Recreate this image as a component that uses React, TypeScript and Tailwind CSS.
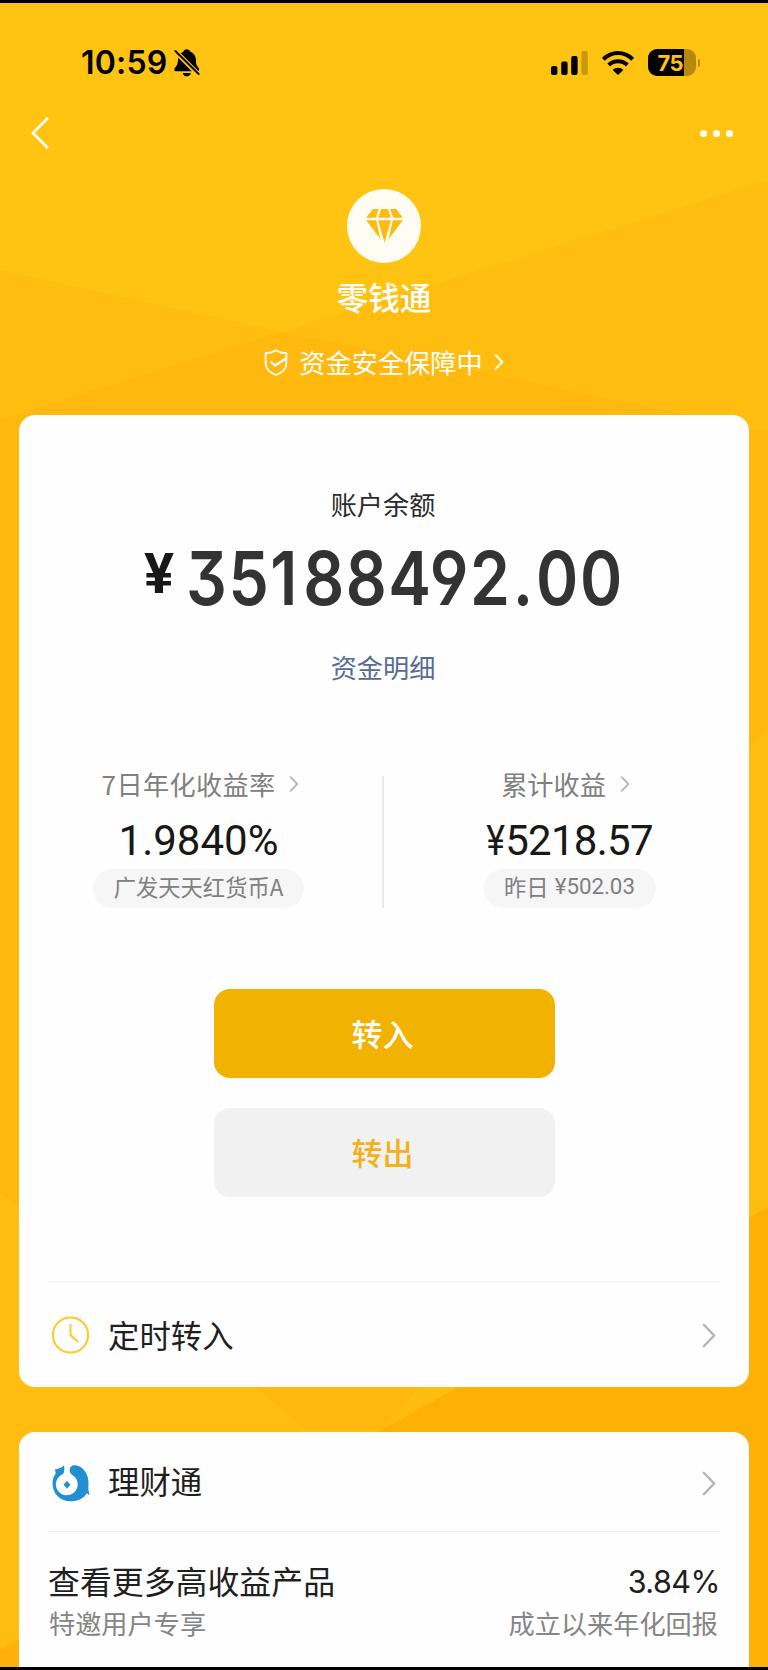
import type { ReactNode } from 'react';

type ChevronProps = {
  className: string;
  strokeWidth?: number;
};

function ChevronRight({ className, strokeWidth = 2.4 }: ChevronProps) {
  return (
    <svg viewBox="0 0 14 26" fill="none" stroke="currentColor" strokeWidth={strokeWidth} strokeLinecap="round" className={className}>
      <path d="M1.6 1.8 12.4 13 1.6 24.2" />
    </svg>
  );
}

function Background() {
  return (
    <svg viewBox="0 0 768 1670" preserveAspectRatio="none" className="absolute inset-0 h-full w-full">
      <rect width="768" height="1670" fill="#ffc412" />
      <path d="M0 268 282 330 768 178V1670H0Z" fill="#ffbe0f" />
      <path d="M0 418 282 330 686 413 768 430V728L460 1040 420 1388 384 1431H305L253 1387 19 1207 0 1195Z" fill="#ffb80e" />
      <path d="M768 1208 460 1388 384 1431 340 1460V1670H768Z" fill="#ffb005" />
      <path d="M0 1653 30 1636V1670H0Z" fill="#ffb00a" />
    </svg>
  );
}

function StatusBar() {
  return (
    <div className="flex h-[88px] items-center pt-[31px] pr-[68px] pl-[81px] text-black">
      <span className="font-['Inter'] text-[32px] leading-8 font-semibold tracking-[0.2px]">10:59</span>
      <svg viewBox="0 0 78 84" className="ml-[7px] h-7 w-[26px]">
        <path d="M38 1C43 1 48 4 49 8 60 12 66 22 66 34 66 48 69 51 74 57 77 62 76 67 70 67H6C0 67 0 60 3 56 10 50 11 44 12 34 13 20 18 12 28 8 29 4 33 1 38 1Z" fill="currentColor" />
        <path d="M26 72H51C49 79 44 82 38 82S28 79 26 72Z" fill="currentColor" />
        <path d="M-2 1 76 79" stroke="#ffc412" strokeWidth="15" />
        <path d="M4 6 74 75" stroke="currentColor" strokeWidth="5.5" strokeLinecap="round" />
      </svg>
      <div className="ml-auto flex items-center">
        <svg viewBox="0 0 38 24" className="h-6 w-[38px]" fill="currentColor">
          <rect x="0" y="15" width="6.4" height="9" rx="2" />
          <rect x="10.2" y="10.5" width="6.4" height="13.5" rx="2" />
          <rect x="20.2" y="5" width="6.4" height="19" rx="2" />
          <rect x="30.4" y="0" width="6.4" height="24" rx="2" opacity="0.22" />
        </svg>
        <svg viewBox="0 0 96 72" className="ml-[13px] h-6 w-8" fill="none" stroke="currentColor" strokeWidth="12">
          <path d="M4 25C29 0 67 0 92 25" />
          <path d="M20 42C36 27 60 27 76 42" />
          <path d="M32 57C41 48 55 48 64 57L48 72Z" fill="currentColor" stroke="none" />
        </svg>
        <div className="ml-[14px] flex h-[27px] w-12 items-center overflow-hidden rounded-[9px] bg-[linear-gradient(90deg,#000_36px,#b5890f_36px)] pl-[10px]">
          <span className="font-['Inter'] text-[22px] leading-none font-bold tracking-[-0.5px] text-[#ffc412]">75</span>
        </div>
        <div className="ml-[2px] h-2 w-[2.5px] rounded-r-full bg-[#b5890f]" />
      </div>
    </div>
  );
}

function Hero() {
  return (
    <header className="flex h-[412px] flex-col text-white">
      <StatusBar />
      <div className="flex h-[84px] shrink-0 items-center justify-between pr-[35px] pl-[31px]">
        <svg viewBox="0 0 18 32" className="h-8 w-[18px]" fill="none" stroke="currentColor" strokeWidth="2.6">
          <path d="M16.8 1 2 16 16.8 31" />
        </svg>
        <div className="flex gap-[6px]">
          <i className="size-[7px] rounded-full bg-white" />
          <i className="size-[7px] rounded-full bg-white" />
          <i className="size-[7px] rounded-full bg-white" />
        </div>
      </div>
      <div className="mx-auto mt-[14px] flex size-[74px] shrink-0 items-center justify-center rounded-full bg-[#fffdf3]">
        <svg viewBox="0 0 110 102" className="h-[34px] w-[37px]" fill="#fdbb10">
          <path d="M20 0H38L29 26H0Z" />
          <path d="M45 0H65L74 26H36Z" />
          <path d="M72 0H90L110 26H81Z" />
          <path d="M0 34H30L43 91Z" />
          <path d="M36 34H74L55 102Z" />
          <path d="M80 34H110L67 91Z" />
        </svg>
      </div>
      <h1 className="mt-[13px] h-10 text-center text-[31.6px] leading-10 font-medium">零钱通</h1>
      <div className="mt-[26px] flex h-10 items-center justify-center text-[26.2px] leading-10">
        <svg viewBox="0 0 24 27" className="mr-[11px] h-[27px] w-6" fill="none" stroke="currentColor" strokeWidth="1.8" strokeLinejoin="round">
          <path d="M12 1.2C9 3.2 5 4 1.6 4.2V14C1.6 20 6 23.8 12 26 18 23.8 22.4 20 22.4 14V4.2C19 4 15 3.2 12 1.2Z" />
          <path d="M6.5 12.5 11 16.5 22 9.5" strokeWidth="2.2" />
        </svg>
        <span>资金安全保障中</span>
        <ChevronRight className="ml-[11px] h-4 w-[10px]" strokeWidth={3.2} />
      </div>
    </header>
  );
}

type StatProps = {
  label: string;
  value: ReactNode;
  note: ReactNode;
  labelClass: string;
  noteClass: string;
};

function Stat({ label, value, note, labelClass, noteClass }: StatProps) {
  return (
    <div className="flex w-[359px] flex-col items-center">
      <div className={`flex h-9 items-center pt-0.5 text-[26.2px] leading-9 text-[#808080] ${labelClass}`}>
        {label}
        <ChevronRight className="ml-[14px] h-4 w-[10px] text-[#b8b8b8]" strokeWidth={3} />
      </div>
      <div className="h-[68px] pt-[10px] font-['Roboto'] text-[42px] leading-[60px] whitespace-nowrap text-[#181818]">{value}</div>
      <div className={`flex h-[39px] items-center justify-center rounded-full bg-[#f6f6f6] pb-[5px] text-[22.3px] leading-8 whitespace-nowrap text-[#808080] ${noteClass}`}>
        {note}
      </div>
    </div>
  );
}

function BalanceCard() {
  return (
    <section className="mx-[19px] flex h-[972px] flex-col rounded-2xl bg-[#fefefe] pt-[71px]">
      <div className="h-9 pr-[2px] text-center text-[26.2px] leading-[37px] text-[#2b2b2b]">账户余额</div>
      <div className="flex h-28 pl-[125px]">
        <span className="w-[42px] pt-[22px] font-['Roboto'] text-[56px] leading-[60px] font-bold text-[#181818]">¥</span>
        <span className="origin-left scale-x-86 font-['Inter'] text-[74.5px] leading-[112px] font-semibold tracking-[1.8px] whitespace-nowrap text-[#333] [font-feature-settings:'cv04','cv09']">
          35<span className="mr-[5px]">1</span>88492<span className="mx-[1.5px]">.</span>00
        </span>
      </div>
      <a className="h-16 pt-px pr-[2px] text-center text-[26.2px] leading-[64px] text-[#576b95]">资金明细</a>
      <div className="mt-[67px] flex h-[143px] shrink-0 items-end">
        <Stat
          label="7日年化收益率"
          value="1.9840%"
          note="广发天天红货币A"
          labelClass="ml-1 tracking-[0.3px]"
          noteClass="w-[211px]"
        />
        <div className="mr-[6px] ml-1 h-[132px] w-[2px] bg-[#e8e8e8]" />
        <Stat
          label="累计收益"
          value={
            <span className="mr-[3px]">
              <span className="-mr-[3px] inline-block origin-right scale-x-85">¥</span>
              <span className="ml-[3px] tracking-[-0.7px]">5218.57</span>
            </span>
          }
          note={
            <>
              昨日<span className="ml-[6px] font-['Roboto']">¥502.03</span>
            </>
          }
          labelClass="mr-[8px]"
          noteClass="w-[172px]"
        />
      </div>
      <button className="mx-auto mt-[81px] h-[89px] w-[341px] shrink-0 rounded-2xl bg-[#f2b202] pr-[3px] text-[31px] font-medium text-white">转入</button>
      <button className="mx-auto mt-[30px] h-[89px] w-[341px] shrink-0 rounded-2xl bg-[#f1f1f1] pr-[3px] text-[31px] font-medium text-[#f2b01a]">转出</button>
      <div className="mx-[29px] mt-[84px] flex h-[106px] items-center border-t-2 border-[#f4f4f4] pr-1 pl-[3px]">
        <svg viewBox="0 0 38 38" className="size-[38px]" fill="none" stroke="#ffc82c" strokeWidth="2">
          <circle cx="19.5" cy="19" r="17.6" />
          <path d="M19.5 8V19L27 26" />
        </svg>
        <span className="ml-[19px] text-[31.4px] text-[#1f1f1f]">定时转入</span>
        <ChevronRight className="ml-auto h-[25px] w-[14px] text-[#b3b3b3]" />
      </div>
    </section>
  );
}

function WealthCard() {
  return (
    <section className="mx-[19px] mt-[45px] h-[235px] rounded-t-2xl bg-[#fefefe] px-[29px]">
      <div className="flex h-[100px] items-center border-b border-[#e9e9e9] pr-1 pl-1">
        <svg viewBox="0 0 114 112" className="mt-[3px] h-[37px] w-[38px]">
          <path
            d="M8 12C16 14 27 10 36 1C38 16 37 25 30 29A33 33 0 1 0 62 31C50 24 49 6 64 1C90 0 109 23 110 52C110 66 108 74 113 91C109 90 107 88 105 85C96 102 77 110 56 110C25 110 1 87 1 56C1 43 5 33 11 26Z"
            fill="#2090d3"
          />
          <path d="M45 48 50 54 56 60 50 66 45 72 40 66 34 60 40 54Z" fill="#2090d3" />
        </svg>
        <span className="mb-[2px] ml-[18px] text-[31.4px] text-[#1f1f1f]">理财通</span>
        <ChevronRight className="mt-[3px] ml-auto h-[25px] w-[14px] text-[#b3b3b3]" />
      </div>
      <div className="flex h-[69px] items-end justify-between text-[31.9px] leading-[42px] text-[#1f1f1f]">
        <span>查看更多高收益产品</span>
        <span className="mt-[2px] -mb-[2px] font-['Inter'] text-[30.5px] tracking-[-0.5px]">3.84%</span>
      </div>
      <div className="mt-[2px] flex justify-between pr-[2px] pl-px text-[26.2px] leading-10 text-[#858585]">
        <span>特邀用户专享</span>
        <span>成立以来年化回报</span>
      </div>
    </section>
  );
}

export default function App() {
  return (
    <div className="relative h-[1670px] w-[768px] overflow-hidden border-t-[3px] border-b-[3px] border-black font-['Noto_Sans_CJK_SC',sans-serif]">
      <Background />
      <main className="relative">
        <Hero />
        <BalanceCard />
        <WealthCard />
      </main>
    </div>
  );
}
